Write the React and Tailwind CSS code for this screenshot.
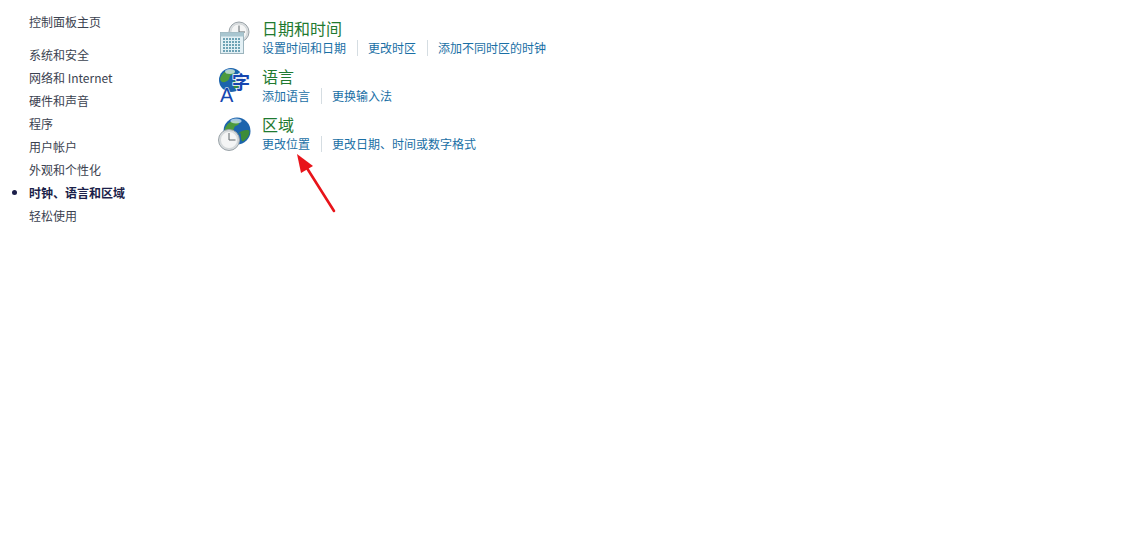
const font = {
  fontFamily: '"Noto Sans CJK SC", "Liberation Sans", sans-serif',
};

const navItems = [
  "系统和安全",
  "网络和 Internet",
  "硬件和声音",
  "程序",
  "用户帐户",
  "外观和个性化",
  "时钟、语言和区域",
  "轻松使用",
];

function ClockFace({ cx, cy, r }) {
  return (
    <g>
      <circle cx={cx} cy={cy} r={r} fill="#d9dddf" stroke="#9aa3a8" strokeWidth="1" />
      <circle cx={cx} cy={cy} r={r - 2} fill="#f4f5f5" stroke="#c2c8cb" strokeWidth="0.5" />
      <path d={`M${cx} ${cy - r + 3.5}V${cy}H${cx + r - 4}`} fill="none" stroke="#5f676b" strokeWidth="1" />
    </g>
  );
}

function Globe({ cx, cy, r }) {
  return (
    <g>
      <circle cx={cx} cy={cy} r={r} fill="#1c64ad" />
      <path
        d={`M${cx - r + 1} ${cy - 1}c2 -7 8 -10 13 -9c3 1 2 4 -2 5c-2 1 -1 5 -4 6c-3 2 -6 2 -7 -2z`}
        fill="#4c9a3d"
      />
      <path d={`M${cx + 1} ${cy + 3}c3 -4 ${r - 3} -5 ${r - 2} -3c0 5 -3 ${r - 5} -7 ${r - 3}c-2 -2 -1 -4 -${2} -${r - 5}z`} fill="#3d8c39" />
      <ellipse cx={cx - 1} cy={cy - r + 3.5} rx={r / 2.4} ry="2.5" fill="#d4e8f5" opacity="0.75" />
    </g>
  );
}

function DateIcon() {
  return (
    <svg width="34" height="38" viewBox="0 0 34 38" className="shrink-0">
      <ClockFace cx={22} cy={15} r={10} />
      <rect x="3.5" y="15.5" width="23" height="21" fill="#e3f0f5" stroke="#9cb4bd" />
      <rect x="3.5" y="15.5" width="23" height="4" fill="#a9c6d0" />
      <g fill="#6fa3b5">
        {[21, 24, 27, 30, 33].map((y) =>
          [6, 9, 12, 15, 18, 21].map((x) => (
            <rect key={`${x}-${y}`} x={x} y={y} width="2" height="2" />
          ))
        )}
      </g>
    </svg>
  );
}

function LanguageIcon() {
  return (
    <svg width="34" height="46" viewBox="0 0 34 46" className="shrink-0 -mb-2">
      <Globe cx={14} cy={15} r={12} />
      <text
        x="15"
        y="24"
        fontSize="18"
        fontWeight="700"
        fill="#1546b0"
        stroke="#ffffff"
        strokeWidth="1.5"
        paintOrder="stroke"
        style={font}
      >
        字
      </text>
      <text
        x="3"
        y="37"
        fontSize="20"
        fill="#1546b0"
        stroke="#ffffff"
        strokeWidth="1"
        paintOrder="stroke"
        style={{ fontFamily: '"Liberation Sans", sans-serif' }}
      >
        A
      </text>
    </svg>
  );
}

function RegionIcon() {
  return (
    <svg width="34" height="38" viewBox="0 0 34 38" className="shrink-0">
      <Globe cx={20} cy={18} r={13.5} />
      <ClockFace cx={12} cy={27} r={10.5} />
    </svg>
  );
}

function Category({ icon, title, links }) {
  return (
    <div className="flex items-start gap-[11px] h-[48px]">
      {icon}
      <div className="flex flex-col">
        <div className="text-[16px] leading-[22px] mb-[1px] text-[#1f7a30]">{title}</div>
        <div className="flex items-center text-[12px] leading-[16px] text-[#1a6fa5]">
          {links.map((link, i) => (
            <span
              key={link}
              className={
                i === 0
                  ? "pr-[11px]"
                  : "pl-[10px] pr-[11px] border-l border-[#d5dde2]"
              }
            >
              {link}
            </span>
          ))}
        </div>
      </div>
    </div>
  );
}

export default function App() {
  return (
    <div className="relative flex h-[544px] w-[1123px] bg-white overflow-hidden" style={font}>
      <aside className="w-[217px] shrink-0 pl-[29px] pt-[14px] text-[12px] text-[#3b4250]">
        <div className="leading-[16px] mb-[17px]">控制面板主页</div>
        <ul className="flex flex-col gap-[7px]">
          {navItems.map((item) => (
            <li
              key={item}
              className={
                item === "时钟、语言和区域"
                  ? "relative leading-[16px] font-bold text-[#1c1f4a]"
                  : "leading-[16px]"
              }
            >
              {item === "时钟、语言和区域" && (
                <span className="absolute left-[-17px] top-[5px] h-[5px] w-[5px] rounded-full bg-[#1c1f4a]" />
              )}
              {item}
            </li>
          ))}
        </ul>
      </aside>
      <main className="flex flex-col pt-[17px]">
        <Category
          icon={<DateIcon />}
          title="日期和时间"
          links={["设置时间和日期", "更改时区", "添加不同时区的时钟"]}
        />
        <Category
          icon={<LanguageIcon />}
          title="语言"
          links={["添加语言", "更换输入法"]}
        />
        <Category
          icon={<RegionIcon />}
          title="区域"
          links={["更改位置", "更改日期、时间或数字格式"]}
        />
      </main>
      <svg width="60" height="80" viewBox="0 0 60 80" className="absolute left-[290px] top-[145px]">
        <path d="M44 66L15 20" stroke="#e8141a" strokeWidth="2.6" strokeLinecap="round" />
        <path d="M7 9L23 21L11 28Z" fill="#e8141a" />
      </svg>
    </div>
  );
}
